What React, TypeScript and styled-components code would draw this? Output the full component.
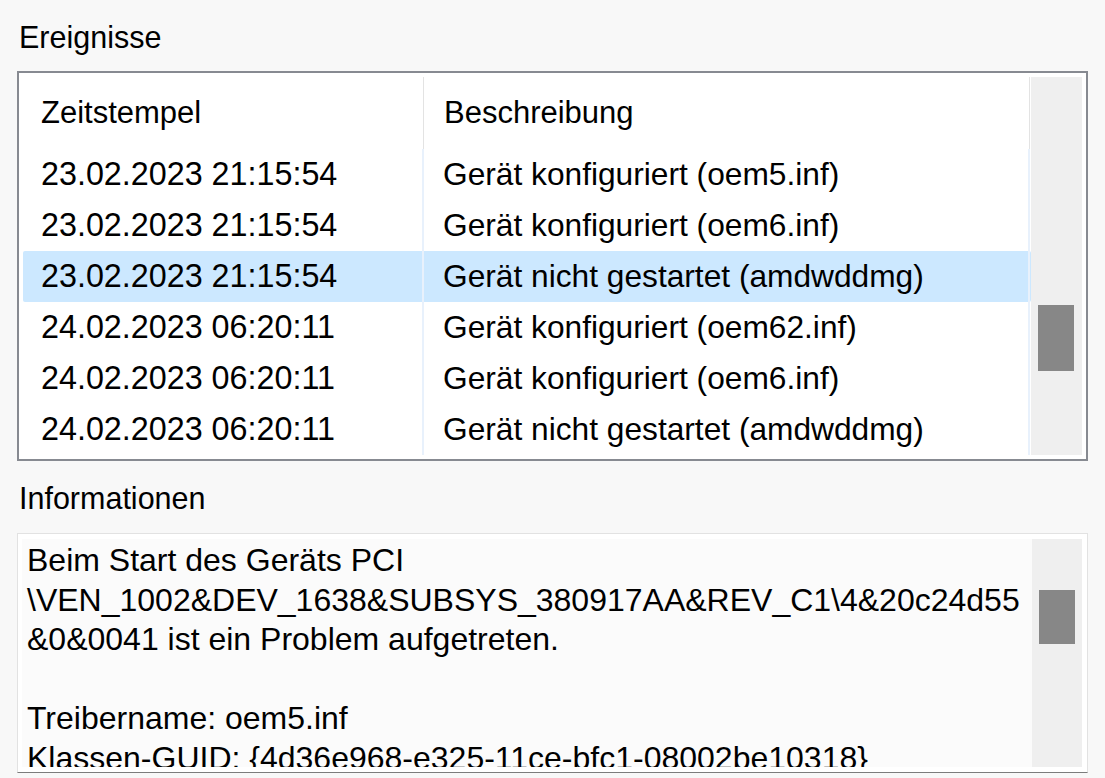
import styled, { createGlobalStyle } from "styled-components";

const GlobalStyle = createGlobalStyle`
  html, body {
    margin: 0;
    padding: 0;
    background: #f8f8f8;
  }
  body {
    font-family: "Liberation Sans", Arial, sans-serif;
    color: #000;
  }
`;

const events = [
  { time: "23.02.2023 21:15:54", text: "Gerät konfiguriert (oem5.inf)" },
  { time: "23.02.2023 21:15:54", text: "Gerät konfiguriert (oem6.inf)" },
  { time: "23.02.2023 21:15:54", text: "Gerät nicht gestartet (amdwddmg)", selected: true },
  { time: "24.02.2023 06:20:11", text: "Gerät konfiguriert (oem62.inf)" },
  { time: "24.02.2023 06:20:11", text: "Gerät konfiguriert (oem6.inf)" },
  { time: "24.02.2023 06:20:11", text: "Gerät nicht gestartet (amdwddmg)" },
];

const infoLines = [
  "Beim Start des Geräts PCI",
  "\\VEN_1002&DEV_1638&SUBSYS_380917AA&REV_C1\\4&20c24d55",
  "&0&0041 ist ein Problem aufgetreten.",
  "",
  "Treibername: oem5.inf",
  "Klassen-GUID: {4d36e968-e325-11ce-bfc1-08002be10318}",
];

const Page = styled.div`
  width: 1105px;
  height: 778px;
  box-sizing: border-box;
  padding: 0 17px;
  overflow: hidden;
`;

const SectionLabel = styled.div<{ $top: number; $bottom: number }>`
  font-size: 30.5px;
  line-height: 36px;
  padding-left: 2px;
  padding-top: ${(p) => p.$top}px;
  margin-bottom: ${(p) => p.$bottom}px;
`;

const ListBox = styled.div`
  height: 390px;
  box-sizing: border-box;
  border: 2px solid #878a91;
  background: #fff;
  padding: 4px;
  display: flex;
`;

const Table = styled.div`
  width: 1008px;
  display: flex;
  flex-direction: column;
`;

const HeaderRow = styled.div`
  display: grid;
  grid-template-columns: 401px 606px;
  height: 72px;
`;

const HeaderCell = styled.div<{ $pad: number }>`
  font-size: 31px;
  line-height: 72px;
  padding-left: ${(p) => p.$pad}px;
  border-right: 1px solid #e3e3e3;
  white-space: nowrap;
`;

const Row = styled.div<{ $selected?: boolean }>`
  display: grid;
  grid-template-columns: 401px 606px;
  height: 51px;
  border-radius: 2px;
  background: ${(p) => (p.$selected ? "#cce8ff" : "transparent")};
`;

const Cell = styled.div<{ $pad: number; $size: number }>`
  font-size: ${(p) => p.$size}px;
  line-height: 51px;
  padding-left: ${(p) => p.$pad}px;
  border-right: 2px solid #e8f1fc;
  white-space: nowrap;
  overflow: hidden;
`;

const Track = styled.div<{ $width: number }>`
  width: ${(p) => p.$width}px;
  background: #efefef;
  margin-left: auto;
  display: flex;
  flex-direction: column;
`;

const Thumb = styled.div<{ $height: number }>`
  width: 36px;
  height: ${(p) => p.$height}px;
  margin-left: 7px;
  background: #878787;
`;

const InfoBox = styled.div`
  height: 240px;
  box-sizing: border-box;
  border: 1px solid #e2e2e2;
  border-bottom: 1px solid #7c7c7c;
  background: #fff;
  padding: 5px 5px 5px 4px;
  display: flex;
`;

const InfoText = styled.div`
  flex: 1;
  background: #fbfbfb;
  padding: 2px 0 0 5px;
  overflow: hidden;
  font-size: 32px;
  line-height: 39.5px;
`;

const InfoLine = styled.div`
  white-space: nowrap;
  height: 39.5px;
`;

export default function App() {
  const listThumbTop = 228;
  const infoThumbTop = 51;

  return (
    <>
      <GlobalStyle />
      <Page>
        <SectionLabel $top={19} $bottom={16}>Ereignisse</SectionLabel>
        <ListBox>
          <Table>
            <HeaderRow>
              <HeaderCell $pad={18}>Zeitstempel</HeaderCell>
              <HeaderCell $pad={20}>Beschreibung</HeaderCell>
            </HeaderRow>
            {events.map((e, i) => (
              <Row key={i} $selected={e.selected}>
                <Cell $pad={18} $size={32.3}>{e.time}</Cell>
                <Cell $pad={19} $size={31.7}>{e.text}</Cell>
              </Row>
            ))}
          </Table>
          <Track $width={51}>
            <Thumb $height={66} style={{ marginTop: listThumbTop }} />
          </Track>
        </ListBox>

        <SectionLabel $top={19} $bottom={17}>Informationen</SectionLabel>
        <InfoBox>
          <InfoText>
            {infoLines.map((l, i) => (
              <InfoLine key={i}>{l}</InfoLine>
            ))}
          </InfoText>
          <Track $width={50}>
            <Thumb $height={54} style={{ marginTop: infoThumbTop }} />
          </Track>
        </InfoBox>
      </Page>
    </>
  );
}
